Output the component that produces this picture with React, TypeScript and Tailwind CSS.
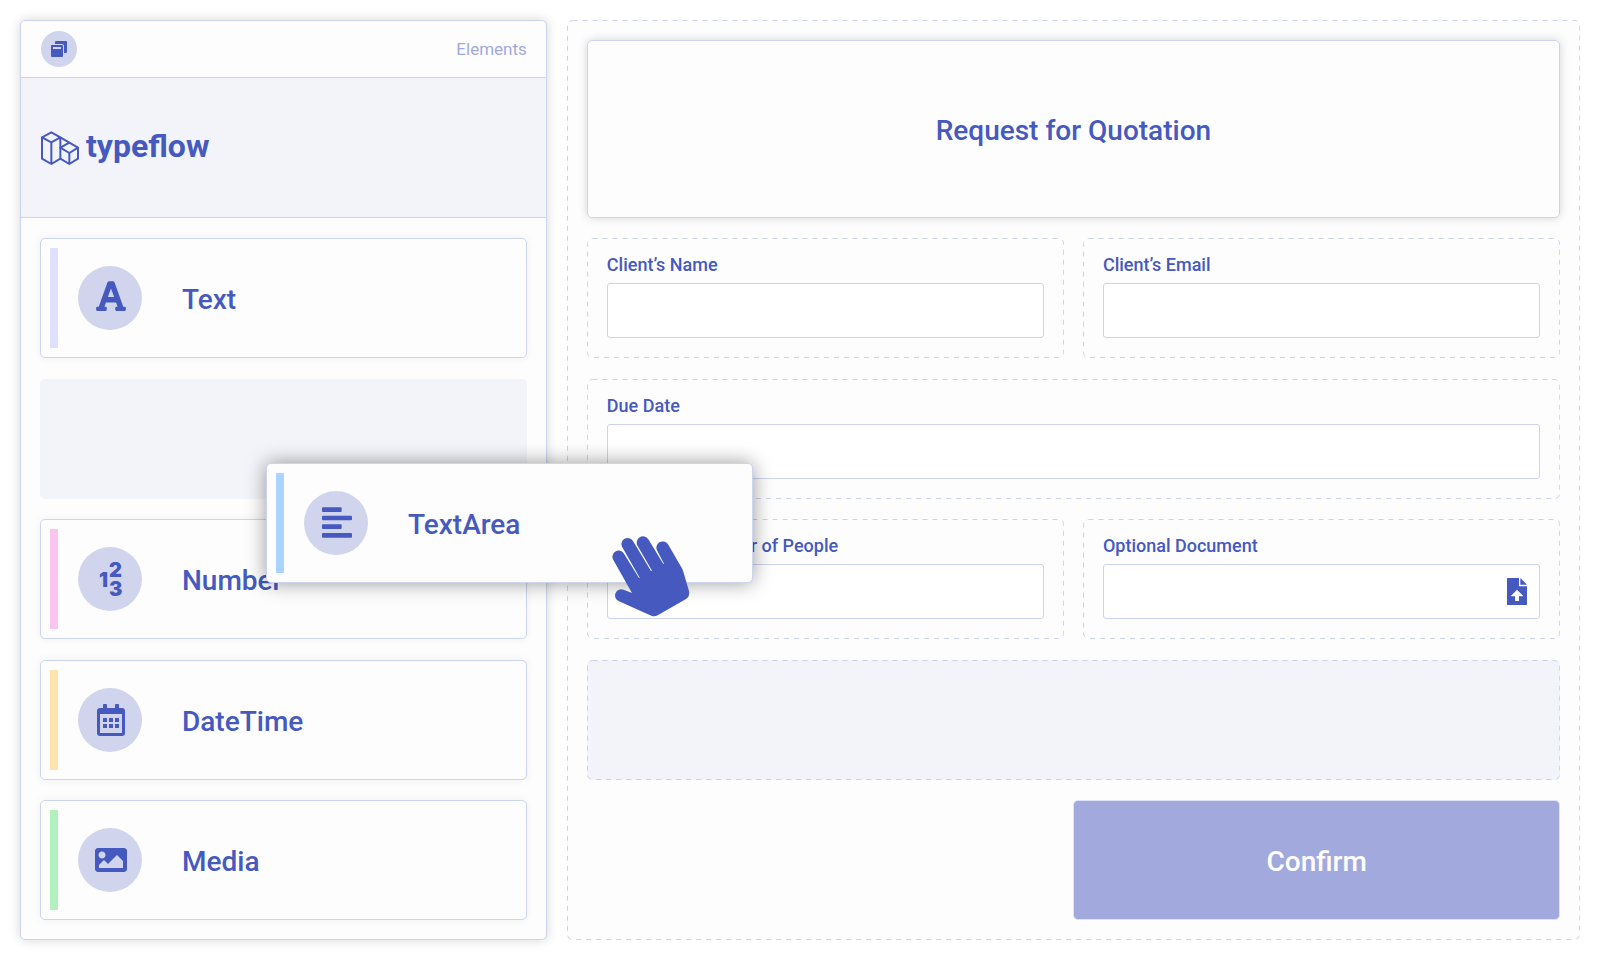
import clsx from 'clsx';
import type { ReactNode } from 'react';
import { FaFont, FaImage } from 'react-icons/fa';

interface ElementCardProps {
  label: string;
  accent: string;
  icon: ReactNode;
  dragging?: boolean;
}

interface FieldProps {
  id: string;
  label: string;
  wide?: boolean;
  children?: ReactNode;
}

function LayersIcon() {
  return (
    <svg className="size-4" viewBox="0 0 16 16" fill="currentColor">
      <path d="M5 0h10a1 1 0 0 1 1 1v10a1 1 0 0 1-1 1h-2V5a2 2 0 0 0-2-2H4V1a1 1 0 0 1 1-1z" />
      <path
        fillRule="evenodd"
        d="M1 4h10a1 1 0 0 1 1 1v10a1 1 0 0 1-1 1H1a1 1 0 0 1-1-1V5a1 1 0 0 1 1-1zM2 6v2h8V6z"
      />
    </svg>
  );
}

function LogoMark() {
  return (
    <svg
      className="h-[34px] w-[38px]"
      viewBox="0 0 114 102"
      fill="none"
      stroke="currentColor"
      strokeWidth="6"
      strokeLinejoin="round"
    >
      <path d="M31 4 58 19 31 34 3 19zM3 19v64l28 16 27-16V19M31 34v65" />
      <path d="M58 19l53 31v33L85 99 58 83M58 50l27-15 26 15-26 16zM85 66v33" />
    </svg>
  );
}

function AlignLeftIcon() {
  return (
    <svg className="h-[31px] w-[30px]" viewBox="0 0 90 93" fill="currentColor">
      <rect y="1" width="59" height="14" rx="3" />
      <rect y="26" width="90" height="14" rx="3" />
      <rect y="52" width="59" height="14" rx="3" />
      <rect y="78" width="90" height="14" rx="3" />
    </svg>
  );
}

function NumbersIcon() {
  return (
    <svg
      className="h-10 w-6 overflow-visible"
      viewBox="0 0 24 40"
      fill="currentColor"
      fontFamily="Inter, sans-serif"
      fontWeight="900"
      fontSize="20"
    >
      <text x="0" y="28">
        1
      </text>
      <text x="10" y="18">
        2
      </text>
      <text x="10" y="37">
        3
      </text>
    </svg>
  );
}

function CalendarIcon() {
  return (
    <svg className="h-8 w-7" viewBox="0 0 28 32" fill="currentColor">
      <path
        fillRule="evenodd"
        d="M6 4V1a1 1 0 0 1 1-1h2a1 1 0 0 1 1 1v3h8V1a1 1 0 0 1 1-1h2a1 1 0 0 1 1 1v3h3a3 3 0 0 1 3 3v22a3 3 0 0 1-3 3H3a3 3 0 0 1-3-3V7a3 3 0 0 1 3-3zM3 10v19h22V10z"
      />
      <path d="M6 14h4v4H6zM12 14h4v4h-4zM18 14h4v4h-4zM6 20h4v4H6zM12 20h4v4h-4zM18 20h4v4h-4z" />
    </svg>
  );
}

function UploadIcon() {
  return (
    <svg className="h-[27px] w-5" viewBox="0 0 60 81" fill="currentColor">
      <path
        fillRule="evenodd"
        d="M2 0h34v25h24v54a2 2 0 0 1-2 2H2a2 2 0 0 1-2-2V2a2 2 0 0 1 2-2zM30 35 12 53q-1 2 1 2h11v12q0 2 2 2h8q2 0 2-2V55h11q2 0 1-2z"
      />
      <path d="M40 0l20 20H40z" />
    </svg>
  );
}

function HandCursor() {
  return (
    <svg className="h-[82px] w-[78px]" viewBox="1085 290 234 246">
      <path
        fill="currentColor"
        d="M1145 461 1089 362A18.500 18.500 0 0 1 1121 343L1166 416 1168 415 1116 324A18.500 18.500 0 0 1 1148 305L1202 395 1205 394 1162 320A18.500 18.500 0 0 1 1194 300L1239 374 1241 373 1221 335A18.500 18.500 0 0 1 1253 315L1293 384Q1297 390 1299 397L1316 455Q1319 472 1306 480L1222 528Q1212 533 1203 529L1106 486A18.500 18.500 0 0 1 1120 451Z"
      />
    </svg>
  );
}

// A longer dash than the browser's own dashed border
function DashedOutline() {
  return (
    <svg className="pointer-events-none absolute inset-0 size-full">
      <rect
        className="h-[calc(100%-1px)] w-[calc(100%-1px)]"
        x="0.5"
        y="0.5"
        rx="5"
        fill="none"
        stroke="#cdd2ec"
        strokeDasharray="5 5"
      />
    </svg>
  );
}

function ElementCard({ label, accent, icon, dragging }: ElementCardProps) {
  return (
    <button
      type="button"
      className={clsx(
        'flex h-full w-full items-center rounded-[5px] border border-[#cdd4ee] bg-[#fdfdfd] p-[9px] text-left text-[#4559be]',
        dragging
          ? 'shadow-[0_0_20px_rgba(0,0,0,0.4)]'
          : 'shadow-[0_0_10px_rgba(0,0,0,0.06)]',
      )}
    >
      <span className={clsx('w-2 self-stretch', accent)} />
      <span className="ml-5 flex size-16 items-center justify-center rounded-full bg-[#d0d5ed] pl-0.5">
        {icon}
      </span>
      <span className="ml-10 pt-1 text-[28px] leading-9 font-medium">
        {label}
      </span>
    </button>
  );
}

function Field({ id, label, wide, children }: FieldProps) {
  return (
    <div
      className={clsx(
        'relative flex flex-col justify-end p-5 pt-3',
        wide && 'col-span-2',
      )}
    >
      <DashedOutline />
      <label
        htmlFor={id}
        className="mb-1 text-[18px] leading-7 font-medium whitespace-nowrap"
      >
        {label}
      </label>
      <div className="relative">
        <input
          id={id}
          type="text"
          className="block h-[55px] w-full rounded-[3px] border border-[#cdd4ee] bg-white px-4 text-[18px] outline-none"
        />
        {children}
      </div>
    </div>
  );
}

export default function App() {
  return (
    <div className="grid min-h-screen grid-cols-[13fr_25fr] gap-5 bg-white p-5 font-[Roboto,sans-serif] text-[#4559be]">
      {/* Element palette */}
      <aside className="flex flex-col rounded-[5px] border border-[#cdd4ee] bg-[#fdfdfd] shadow-[0_0_12px_rgba(0,0,0,0.16)]">
        <header className="flex h-[57px] items-center justify-between border-b border-[#cdd4ee] pr-[19px] pl-5">
          <span className="flex size-9 items-center justify-center rounded-full bg-[#d0d5ed]">
            <LayersIcon />
          </span>
          <span className="text-[17px] leading-6 text-[#a1a9dc]">Elements</span>
        </header>
        <div className="flex h-[140px] items-center gap-[7px] border-b border-[#cdd4ee] bg-[#f3f4f9] px-5">
          <LogoMark />
          <span className="pb-1 text-[32px] leading-10 font-bold">
            typeflow
          </span>
        </div>
        <div className="grid flex-1 auto-rows-[120px] content-between gap-y-5 p-[19px] pt-5">
          <ElementCard
            label="Text"
            accent="bg-[#dfe0ff]"
            icon={<FaFont size={34} className="mb-1" />}
          />
          {/* Empty slot, its card is being dragged */}
          <div className="relative rounded-[5px] bg-[#f3f4f9]">
            <div className="absolute top-[84px] left-[226px] z-10 h-full w-full">
              <ElementCard
                label="TextArea"
                accent="bg-[#aad4ff]"
                icon={<AlignLeftIcon />}
                dragging
              />
              <div className="absolute top-[73px] left-[346px]">
                <HandCursor />
              </div>
            </div>
          </div>
          <ElementCard
            label="Number"
            accent="bg-[#fcc4f0]"
            icon={<NumbersIcon />}
          />
          <ElementCard
            label="DateTime"
            accent="bg-[#ffe3ad]"
            icon={<CalendarIcon />}
          />
          <ElementCard
            label="Media"
            accent="bg-[#b2f0be]"
            icon={<FaImage size={32} />}
          />
        </div>
      </aside>

      {/* Form being built */}
      <main className="relative flex flex-col gap-5 rounded-[5px] bg-[#fdfdfd] p-5">
        <DashedOutline />
        <div className="flex h-[178px] items-center justify-center rounded-[5px] border border-[#cdd4ee] shadow-[0_0_10px_rgba(0,0,0,0.16)]">
          <h1 className="pt-1 text-[28px] leading-9 font-medium">
            Request for Quotation
          </h1>
        </div>
        <form className="grid flex-1 auto-rows-[120px] grid-cols-2 content-between gap-x-[19px] gap-y-5">
          <Field id="client-name" label="Client’s Name" />
          <Field id="client-email" label="Client’s Email" />
          <Field id="due-date" label="Due Date" wide />
          <Field id="people" label="Estimated Number of People" />
          <Field id="document" label="Optional Document">
            <button
              type="button"
              aria-label="Upload document"
              className="absolute top-[14px] right-[13px]"
            >
              <UploadIcon />
            </button>
          </Field>
          <div className="relative col-span-2 rounded-[5px] bg-[#f3f4f9]">
            <DashedOutline />
          </div>
          <div className="col-span-2 flex justify-end">
            <button
              type="button"
              className="w-1/2 rounded-[5px] border border-[#dfe2f4] bg-[#a1a9dd] pt-1 text-[28px] leading-9 font-medium text-white"
            >
              Confirm
            </button>
          </div>
        </form>
      </main>
    </div>
  );
}
